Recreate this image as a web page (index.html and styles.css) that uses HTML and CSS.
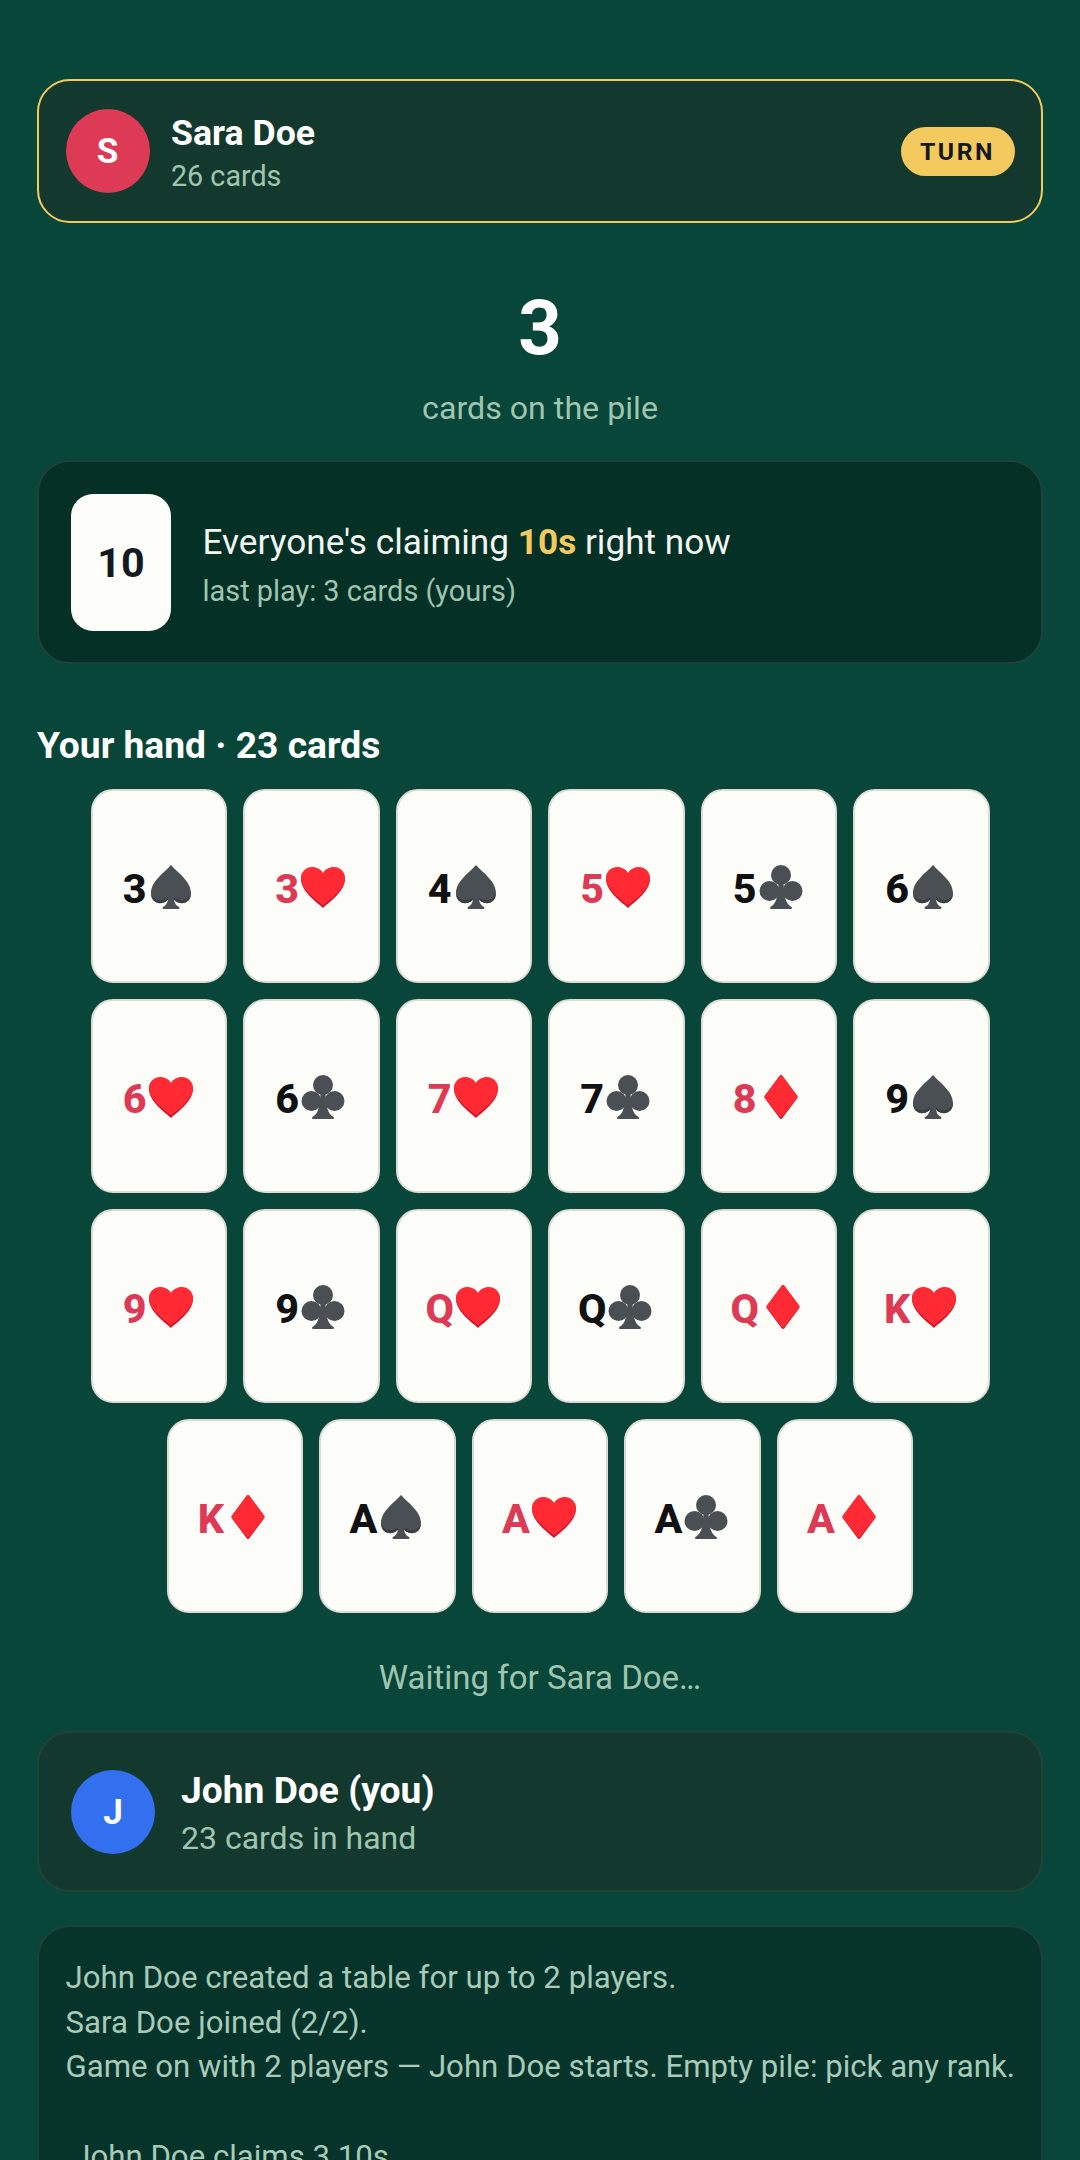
FILE: index.html
```html
<!DOCTYPE html>
<html lang="en">
<head>
  <meta charset="UTF-8">
  <meta name="viewport" content="width=device-width, initial-scale=1.0">
  <title>Cheat</title>
  <link rel="stylesheet" href="styles.css">
</head>
<body>
  <svg class="defs" width="0" height="0">
    <symbol id="spade" viewBox="-4 0 48 44">
      <path fill="#4a4f53" d="M20 0C26 7 40 16 40 28C40 35 35 39 29 38C26.500 37.600 24.500 36.300 23 34.500C23.500 38 25 40.500 28 42C28.800 42.500 28.500 44 27.500 44H12.500C11.500 44 11.200 42.500 12 42C15 40.500 16.500 38 17 34.500C15.500 36.300 13.500 37.600 11 38C5 39 0 35 0 28C0 16 14 7 20 0Z"/>
      <path fill="#3b3f43" d="M0 28C0.500 32 5 36 11 35C13.500 34.600 15.500 33.500 17 32L17 34.500C15.500 36.300 13.500 37.600 11 38C5 39 0 35 0 28ZM40 28C39.500 32 35 36 29 35C26.500 34.600 24.500 33.500 23 32L23 34.500C24.500 36.300 26.500 37.600 29 38C35 39 40 35 40 28Z"/>
    </symbol>
    <symbol id="heart" viewBox="-2 -2 48 44">
      <path fill="#d3122a" d="M22 41C17 36 0 25 0 12C0 5 5.500 1 11 1C16 1 20 3.500 22 7C24 3.500 28 1 33 1C38.500 1 44 5 44 12C44 25 27 36 22 41Z"/>
      <path fill="#ff2a33" d="M22 38.500C17 34 0 23 0 11C0 4.500 5.500 0 11 0C16 0 20 2.500 22 6C24 2.500 28 0 33 0C38.500 0 44 4.500 44 11C44 23 27 34 22 38.500Z"/>
    </symbol>
    <symbol id="diamond" viewBox="-7.500 0 48 44">
      <path fill="#d3122a" d="M15 1C16 -0.300 17 -0.300 18 1L32.500 20.500C33.200 21.400 33.200 22.600 32.500 23.500L18 43C17 44.300 16 44.300 15 43L0.500 23.500C-0.200 22.600 -0.200 21.400 0.500 20.500Z"/>
      <path fill="#ff2a33" d="M15 1C16 -0.300 17 -0.300 18 1L32.500 20.500C33.200 21.400 33.200 21.800 32.500 22.700L18 41.500C17 42.800 16 42.800 15 41.500L0.500 22.700C-0.200 21.800 -0.200 21.400 0.500 20.500Z"/>
    </symbol>
    <symbol id="club" viewBox="-2.500 0 48 44">
      <g fill="#4a4f53">
        <circle cx="21.500" cy="10" r="10"/>
        <circle cx="10" cy="26" r="10"/>
        <circle cx="33" cy="26" r="10"/>
        <path d="M19 14H24C24 28 25 38 32 42C32.800 42.500 32.500 44 31.500 44H11.500C10.500 44 10.200 42.500 11 42C18 38 19 28 19 14Z"/>
      </g>
    </symbol>
  </svg>

  <div class="page">
    <div class="player player-active">
      <div class="avatar avatar-red">S</div>
      <div class="player-info">
        <div class="player-name">Sara Doe</div>
        <div class="player-sub">26 cards</div>
      </div>
      <div class="turn-badge">TURN</div>
    </div>

    <div class="pile">
      <div class="pile-count">3</div>
      <div class="pile-label">cards on the pile</div>
    </div>

    <div class="claim">
      <div class="claim-rank">10</div>
      <div class="claim-body">
        <div class="claim-text">Everyone's claiming <b>10s</b> right now</div>
        <div class="claim-sub">last play: 3 cards (yours)</div>
      </div>
    </div>

    <h2 class="hand-title">Your hand · 23 cards</h2>

    <div class="hand">
      <div class="card"><span class="rank">3</span><svg class="suit"><use href="#spade"/></svg></div>
      <div class="card red"><span class="rank">3</span><svg class="suit"><use href="#heart"/></svg></div>
      <div class="card"><span class="rank">4</span><svg class="suit"><use href="#spade"/></svg></div>
      <div class="card red"><span class="rank">5</span><svg class="suit"><use href="#heart"/></svg></div>
      <div class="card"><span class="rank">5</span><svg class="suit"><use href="#club"/></svg></div>
      <div class="card"><span class="rank">6</span><svg class="suit"><use href="#spade"/></svg></div>
      <div class="card red"><span class="rank">6</span><svg class="suit"><use href="#heart"/></svg></div>
      <div class="card"><span class="rank">6</span><svg class="suit"><use href="#club"/></svg></div>
      <div class="card red"><span class="rank">7</span><svg class="suit"><use href="#heart"/></svg></div>
      <div class="card"><span class="rank">7</span><svg class="suit"><use href="#club"/></svg></div>
      <div class="card red"><span class="rank">8</span><svg class="suit"><use href="#diamond"/></svg></div>
      <div class="card"><span class="rank">9</span><svg class="suit"><use href="#spade"/></svg></div>
      <div class="card red"><span class="rank">9</span><svg class="suit"><use href="#heart"/></svg></div>
      <div class="card"><span class="rank">9</span><svg class="suit"><use href="#club"/></svg></div>
      <div class="card red"><span class="rank">Q</span><svg class="suit"><use href="#heart"/></svg></div>
      <div class="card"><span class="rank">Q</span><svg class="suit"><use href="#club"/></svg></div>
      <div class="card red"><span class="rank">Q</span><svg class="suit"><use href="#diamond"/></svg></div>
      <div class="card red"><span class="rank">K</span><svg class="suit"><use href="#heart"/></svg></div>
      <div class="card red"><span class="rank">K</span><svg class="suit"><use href="#diamond"/></svg></div>
      <div class="card"><span class="rank">A</span><svg class="suit"><use href="#spade"/></svg></div>
      <div class="card red"><span class="rank">A</span><svg class="suit"><use href="#heart"/></svg></div>
      <div class="card"><span class="rank">A</span><svg class="suit"><use href="#club"/></svg></div>
      <div class="card red"><span class="rank">A</span><svg class="suit"><use href="#diamond"/></svg></div>
    </div>

    <div class="waiting">Waiting for Sara Doe…</div>

    <div class="player player-you">
      <div class="avatar avatar-blue">J</div>
      <div class="player-info">
        <div class="player-name">John Doe (you)</div>
        <div class="player-sub">23 cards in hand</div>
      </div>
    </div>

    <div class="log">John Doe created a table for up to 2 players.
Sara Doe joined (2/2).
Game on with 2 players — John Doe starts. Empty pile: pick any rank.

 John Doe claims 3 10s.</div>
  </div>
</body>
</html>
```

FILE: styles.css
```css
* {
  box-sizing: border-box;
}
html, body {
  height: 2160px;
  overflow: hidden;
}
body {
  margin: 0;
  background: #074638;
  font-family: Roboto, sans-serif;
  color: #fff;
}
.defs {
  position: absolute;
}
.page {
  display: flex;
  flex-direction: column;
  padding: 79px 37px 0;
}
.player {
  display: flex;
  align-items: center;
  border-radius: 33px;
  background: #13392f;
}
.player-active {
  height: 144px;
  padding: 0 26.500px;
  gap: 21.500px;
  border: 2.750px solid #f4c95d;
}
.player-you {
  height: 161px;
  margin-top: 31.500px;
  padding: 0 32px;
  gap: 26px;
  border: 2.750px solid #224238;
}
.avatar {
  width: 84px;
  height: 84px;
  flex: none;
  display: flex;
  align-items: center;
  justify-content: center;
  border-radius: 50%;
  font-size: 35.200px;
  font-weight: 700;
}
.avatar-red {
  background: #dc3a55;
}
.avatar-blue {
  background: #3370f0;
}
.player-info {
  flex: 1;
  margin-top: 3px;
}
.player-name {
  font-size: 35.700px;
  font-weight: 700;
  line-height: 44px;
}
.player-sub {
  margin-top: 2px;
  font-size: 28.700px;
  line-height: 38px;
  color: #9fc5b0;
}
.player-you .player-name {
  font-size: 37.200px;
  line-height: 48px;
}
.player-you .player-sub {
  margin-top: 2px;
  font-size: 32px;
  line-height: 44px;
}
.turn-badge {
  height: 49px;
  padding: 0 19.500px;
  display: flex;
  align-items: center;
  border-radius: 25px;
  background: #f4c95d;
  color: #14181f;
  font-size: 24.750px;
  font-weight: 700;
  letter-spacing: 2.500px;
}
.pile {
  margin-top: 60px;
  text-align: center;
}
.pile-count {
  font-size: 76px;
  font-weight: 700;
  line-height: 90px;
}
.pile-label {
  margin-top: 13px;
  font-size: 32.200px;
  line-height: 44px;
  color: #9fc5b0;
}
.claim {
  height: 204px;
  margin-top: 30px;
  padding: 0 32px;
  display: flex;
  align-items: center;
  gap: 31.500px;
  border: 2.750px solid #1d4238;
  border-radius: 33px;
  background: #043026;
}
.claim-rank {
  width: 100px;
  height: 137px;
  padding-top: 2px;
  display: flex;
  align-items: center;
  justify-content: center;
  border-radius: 22px;
  background: #fcfdf8;
  color: #14181f;
  font-size: 41.250px;
  font-weight: 700;
}
.claim-body {
  margin-top: 6px;
}
.claim-text {
  font-size: 35.200px;
  line-height: 46px;
  color: #f2f5f0;
}
.claim-text b {
  color: #f4c95d;
}
.claim-sub {
  margin-top: 6px;
  font-size: 28.900px;
  line-height: 40px;
  color: #9fc5b0;
}
.hand-title {
  margin: 59px 0 22px;
  font-size: 37.200px;
  font-weight: 700;
  line-height: 44px;
}
.hand {
  display: flex;
  flex-wrap: wrap;
  justify-content: center;
  gap: 16.500px 16px;
}
.card {
  width: 136.500px;
  height: 193.500px;
  padding-top: 3px;
  display: flex;
  align-items: center;
  justify-content: center;
  border: 2.750px solid #dcdcd2;
  border-radius: 22px;
  background: #fcfdf8;
  color: #111;
}
.card.red {
  color: #dc3a55;
}
.rank {
  margin-top: 3px;
  font-size: 41.250px;
  font-weight: 800;
}
.suit {
  width: 48px;
  height: 44px;
}
.waiting {
  margin-top: 43px;
  text-align: center;
  font-size: 33px;
  line-height: 44px;
  color: #9fc5b0;
}
.log {
  margin-top: 33px;
  min-height: 400px;
  padding: 29px 20px 29px 26.500px;
  border: 2.750px solid #1d4238;
  border-radius: 33px;
  background: #06332a;
  color: #a7cbb8;
  font-size: 31.200px;
  line-height: 44.700px;
  white-space: pre-wrap;
}
```
